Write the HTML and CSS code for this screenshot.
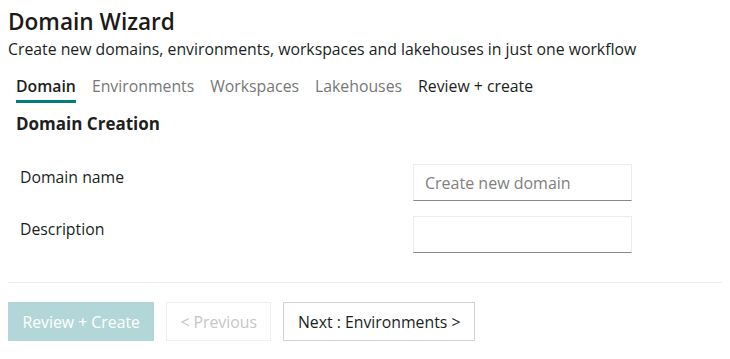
FILE: index.html
```html
<!DOCTYPE html>
<html lang="en">
<head>
  <meta charset="UTF-8">
  <title>Domain Wizard</title>
  <link rel="stylesheet" href="styles.css">
</head>
<body>
  <div class="wizard">
    <h1 class="wizard-title">Domain Wizard</h1>
    <p class="wizard-subtitle">Create new domains, environments, workspaces and lakehouses in just one workflow</p>

    <nav class="tabs">
      <span class="tab active">Domain</span>
      <span class="tab muted">Environments</span>
      <span class="tab muted">Workspaces</span>
      <span class="tab muted">Lakehouses</span>
      <span class="tab">Review + create</span>
    </nav>

    <h2 class="section-title">Domain Creation</h2>

    <div class="form">
      <div class="form-row">
        <label class="form-label" for="domainName">Domain name</label>
        <input class="form-input" id="domainName" type="text" placeholder="Create new domain">
      </div>
      <div class="form-row">
        <label class="form-label" for="description">Description</label>
        <input class="form-input" id="description" type="text">
      </div>
    </div>

    <div class="divider"></div>

    <div class="actions">
      <button class="btn btn-primary" disabled>Review + Create</button>
      <button class="btn btn-disabled" disabled>&lt; Previous</button>
      <button class="btn">Next : Environments &gt;</button>
    </div>
  </div>
</body>
</html>
```

FILE: styles.css
```css
body {
  margin: 8px;
  background: #fff;
  color: #201f1e;
  font-family: 'Segoe UI', 'Open Sans', sans-serif;
}

.wizard-title {
  margin: 0;
  font-size: 22.6px;
  font-weight: 600;
  line-height: 28px;
  color: #1b1a19;
}

.wizard-subtitle {
  margin: 2px 0 0;
  font-size: 15.8px;
  line-height: 22px;
}

.tabs {
  display: flex;
  gap: 16px;
  padding: 0 8px;
  margin-top: 15px;
}

.tab {
  font-size: 15.8px;
  line-height: 22px;
  padding-bottom: 3px;
  border-bottom: 3px solid transparent;
}

.tab.active {
  font-weight: 600;
  border-bottom-color: #037c7c;
}

.tab.muted {
  color: #777;
}

.section-title {
  margin: 10px 0 0;
  padding-left: 8px;
  font-size: 17px;
  font-weight: 700;
  line-height: 22px;
}

.form {
  display: flex;
  flex-direction: column;
  gap: 15px;
  margin-top: 29px;
  padding-left: 12px;
}

.form-row {
  display: grid;
  grid-template-columns: 393px 219px;
  align-items: start;
}

.form-label {
  font-size: 15.8px;
  line-height: 22px;
  padding-top: 2px;
}

.form-input {
  box-sizing: border-box;
  width: 219px;
  height: 37px;
  padding: 0 11px;
  border: 1px solid #ececec;
  border-bottom-color: #8a8886;
  border-radius: 0;
  font-family: inherit;
  font-size: 16px;
  color: #201f1e;
  outline: none;
}

.form-input::placeholder {
  color: #7f7f7f;
}

.divider {
  height: 1px;
  background: #ececec;
  margin: 29px -8px 0 0;
}

.actions {
  display: flex;
  gap: 12px;
  margin-top: 19px;
}

.btn {
  box-sizing: border-box;
  height: 39px;
  padding: 0 14px;
  background: #fff;
  border: 1px solid #d2d2d2;
  font-family: inherit;
  font-size: 15.8px;
  color: #201f1e;
  cursor: pointer;
}

.btn-primary {
  background: #b3d7d8;
  border-color: #b3d7d8;
  color: #fff;
  padding: 0 13.5px;
}

.btn-disabled {
  border-color: #efefef;
  color: #c6c6c6;
  padding: 0 13px;
}
```
